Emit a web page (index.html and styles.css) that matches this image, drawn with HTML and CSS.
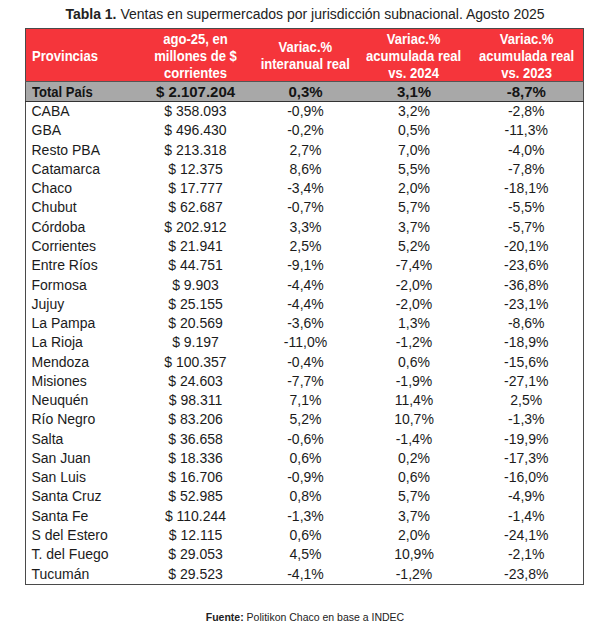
FILE: index.html
```html
<!DOCTYPE html>
<html lang="es">
<head>
<meta charset="utf-8">
<title>Tabla 1</title>
<link rel="stylesheet" href="styles.css">
</head>
<body>
<div class="page">
  <h1 class="title"><b>Tabla 1.</b> Ventas en supermercados por jurisdicción subnacional. Agosto 2025</h1>
  <table class="data">
    <colgroup>
      <col class="c1"><col class="c2"><col class="c3"><col class="c4"><col class="c5">
    </colgroup>
    <thead>
      <tr>
        <th class="left"><span class="nar">Provincias</span></th>
        <th><span class="nar">ago-25, en<br>millones de $<br>corrientes</span></th>
        <th><span class="nar">Variac.%<br>interanual real</span></th>
        <th><span class="nar">Variac.%<br>acumulada real<br>vs. 2024</span></th>
        <th><span class="nar">Variac.%<br>acumulada real<br>vs. 2023</span></th>
      </tr>
    </thead>
    <tbody>
      <tr class="total"><td class="left"><span class="nar">Total País</span></td><td>$ 2.107.204</td><td>0,3%</td><td>3,1%</td><td>-8,7%</td></tr>
      <tr><td class="left">CABA</td><td>$ 358.093</td><td>-0,9%</td><td>3,2%</td><td>-2,8%</td></tr>
      <tr><td class="left">GBA</td><td>$ 496.430</td><td>-0,2%</td><td>0,5%</td><td>-11,3%</td></tr>
      <tr><td class="left">Resto PBA</td><td>$ 213.318</td><td>2,7%</td><td>7,0%</td><td>-4,0%</td></tr>
      <tr><td class="left">Catamarca</td><td>$ 12.375</td><td>8,6%</td><td>5,5%</td><td>-7,8%</td></tr>
      <tr><td class="left">Chaco</td><td>$ 17.777</td><td>-3,4%</td><td>2,0%</td><td>-18,1%</td></tr>
      <tr><td class="left">Chubut</td><td>$ 62.687</td><td>-0,7%</td><td>5,7%</td><td>-5,5%</td></tr>
      <tr><td class="left">Córdoba</td><td>$ 202.912</td><td>3,3%</td><td>3,7%</td><td>-5,7%</td></tr>
      <tr><td class="left">Corrientes</td><td>$ 21.941</td><td>2,5%</td><td>5,2%</td><td>-20,1%</td></tr>
      <tr><td class="left">Entre Ríos</td><td>$ 44.751</td><td>-9,1%</td><td>-7,4%</td><td>-23,6%</td></tr>
      <tr><td class="left">Formosa</td><td>$ 9.903</td><td>-4,4%</td><td>-2,0%</td><td>-36,8%</td></tr>
      <tr><td class="left">Jujuy</td><td>$ 25.155</td><td>-4,4%</td><td>-2,0%</td><td>-23,1%</td></tr>
      <tr><td class="left">La Pampa</td><td>$ 20.569</td><td>-3,6%</td><td>1,3%</td><td>-8,6%</td></tr>
      <tr><td class="left">La Rioja</td><td>$ 9.197</td><td>-11,0%</td><td>-1,2%</td><td>-18,9%</td></tr>
      <tr><td class="left">Mendoza</td><td>$ 100.357</td><td>-0,4%</td><td>0,6%</td><td>-15,6%</td></tr>
      <tr><td class="left">Misiones</td><td>$ 24.603</td><td>-7,7%</td><td>-1,9%</td><td>-27,1%</td></tr>
      <tr><td class="left">Neuquén</td><td>$ 98.311</td><td>7,1%</td><td>11,4%</td><td>2,5%</td></tr>
      <tr><td class="left">Río Negro</td><td>$ 83.206</td><td>5,2%</td><td>10,7%</td><td>-1,3%</td></tr>
      <tr><td class="left">Salta</td><td>$ 36.658</td><td>-0,6%</td><td>-1,4%</td><td>-19,9%</td></tr>
      <tr><td class="left">San Juan</td><td>$ 18.336</td><td>0,6%</td><td>0,2%</td><td>-17,3%</td></tr>
      <tr><td class="left">San Luis</td><td>$ 16.706</td><td>-0,9%</td><td>0,6%</td><td>-16,0%</td></tr>
      <tr><td class="left">Santa Cruz</td><td>$ 52.985</td><td>0,8%</td><td>5,7%</td><td>-4,9%</td></tr>
      <tr><td class="left">Santa Fe</td><td>$ 110.244</td><td>-1,3%</td><td>3,7%</td><td>-1,4%</td></tr>
      <tr><td class="left">S del Estero</td><td>$ 12.115</td><td>0,6%</td><td>2,0%</td><td>-24,1%</td></tr>
      <tr><td class="left">T. del Fuego</td><td>$ 29.053</td><td>4,5%</td><td>10,9%</td><td>-2,1%</td></tr>
      <tr><td class="left">Tucumán</td><td>$ 29.523</td><td>-4,1%</td><td>-1,2%</td><td>-23,8%</td></tr>
    </tbody>
  </table>
  <p class="source"><b>Fuente:</b> Politikon Chaco en base a INDEC</p>
</div>
</body>
</html>
```
FILE: styles.css
```css
html, body {
  margin: 0;
  padding: 0;
  background: #ffffff;
}
.page {
  width: 610px;
  height: 630px;
  display: flex;
  flex-direction: column;
  align-items: center;
  padding-top: 5px;
  box-sizing: border-box;
}
.title {
  margin: 0;
  height: 23px;
  font-family: "Liberation Sans", Arial, sans-serif;
  font-weight: normal;
  font-size: 14px;
  line-height: 18px;
  color: #222222;
  text-align: center;
  white-space: nowrap;
}
.title b {
  font-weight: bold;
}
.data {
  border-collapse: collapse;
  table-layout: fixed;
  width: 558px;
  margin-left: -2px;
  border: 1px solid #4a4a4a;
  font-family: "Liberation Sans", Arial, sans-serif;
  font-size: 14px;
  color: #1b1b1b;
}
.c1 { width: 113px; }
.c2 { width: 115px; }
.c3 { width: 105px; }
.c4 { width: 112px; }
.c5 { width: 113px; }
.nar {
  display: inline-block;
  transform: scaleX(0.87);
  transform-origin: center;
  white-space: nowrap;
}
.data th {
  background: #f5353b;
  color: #ffffff;
  font-family: "Liberation Sans", Arial, sans-serif;
  font-weight: bold;
  font-size: 15px;
  line-height: 17px;
  height: 52px;
  padding: 0;
  text-align: center;
  vertical-align: middle;
}
.data th.left {
  text-align: left;
  padding-left: 6px;
}
.data .left .nar {
  transform-origin: left center;
}
.data td {
  height: 19.28px;
  padding: 0;
  line-height: 19px;
  text-align: center;
  white-space: nowrap;
}
.data td.left {
  text-align: left;
  padding-left: 6px;
}
.data tr.total td {
  background: #a8a8a8;
  font-weight: bold;
  font-size: 15px;
  color: #141414;
  height: 18px;
  border-top: 1px solid #555555;
  border-bottom: 1px solid #333333;
}
.source {
  margin: 26px 0 0 0;
  font-family: "Liberation Sans", Arial, sans-serif;
  font-size: 10.5px;
  color: #222222;
  text-align: center;
}
```
